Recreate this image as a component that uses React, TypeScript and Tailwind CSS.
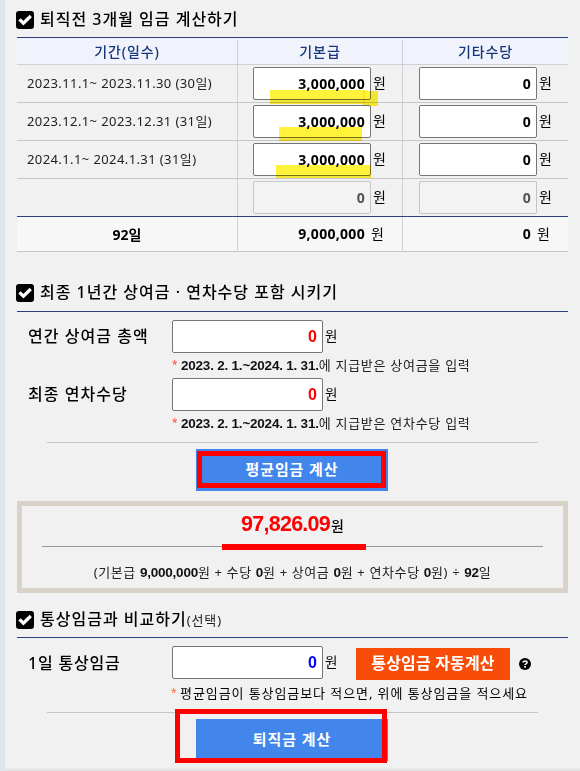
import React from 'react'

interface WageRow {
  period: string
  base: string
  extra: string
  disabled?: boolean
  marks?: string[]
}

const ROWS: WageRow[] = [
  {
    period: '2023.11.1~ 2023.11.30 (30일)',
    base: '3,000,000',
    extra: '0',
    marks: ['left-[32px] top-[25px] w-[95px] h-[14px]', 'left-[125px] top-[26px] w-[15px] h-[15px]'],
  },
  {
    period: '2023.12.1~ 2023.12.31 (31일)',
    base: '3,000,000',
    extra: '0',
    marks: ['left-[41px] top-[24px] w-[83px] h-[14px]'],
  },
  {
    period: '2024.1.1~ 2024.1.31 (31일)',
    base: '3,000,000',
    extra: '0',
    marks: ['left-[38px] top-[24px] w-[95px] h-[13px]'],
  },
  { period: '', base: '0', extra: '0', disabled: true },
]

function CheckBadge() {
  return (
    <svg viewBox="0 0 18 18" className="w-[18px] h-[18px] shrink-0">
      <rect width="18" height="18" rx="3" fill="#000" />
      <path d="M3.5 8.4 7.4 12.2 14.8 5" fill="none" stroke="#fff" strokeWidth="3.2" />
    </svg>
  )
}

function SectionTitle({ children, note }: { children: React.ReactNode; note?: string }) {
  return (
    <h2 className="flex items-center h-[26px] -ml-px whitespace-nowrap">
      <CheckBadge />
      <span className="ml-[6px] text-[16px] font-medium leading-[24px] tracking-[1px] -mt-[2px]">{children}</span>
      {note && <span className="text-[13px] leading-[26px] tracking-[0.9px] text-[#222]">{note}</span>}
    </h2>
  )
}

function AmountBox({ value, disabled }: { value: string; disabled?: boolean }) {
  return (
    <div
      className={`w-[118px] h-[33px] border rounded-[2px] pr-[5px] text-right text-[14px] leading-[31px] font-bold tracking-[0.3px] ${
        disabled ? 'border-[#c5c5c5] bg-[#f3f3f3] text-[#545454]' : 'border-[#767676] bg-white text-black'
      }`}
    >
      {value}
    </div>
  )
}

function AmountCell({ value, disabled, marks = [] }: { value: string; disabled?: boolean; marks?: string[] }) {
  return (
    <div className="relative flex pl-[15px] last:pl-[16px] pt-[2px] border-l border-[#d0d0d8]">
      <AmountBox value={value} disabled={disabled} />
      <span className="ml-[2px] text-[14px] leading-[32px]">원</span>
      {marks.map((m) => (
        <i key={m} className={`absolute bg-[#fff23a] mix-blend-multiply ${m}`} />
      ))}
    </div>
  )
}

function TotalCell({ value }: { value: string }) {
  return (
    <div className="flex border-l border-[#d0d0d8] last:pl-px text-[14px] leading-[34px]">
      <span className="w-[127px] text-right font-bold tracking-[0.3px]">{value}</span>
      <span className="ml-[6px]">원</span>
    </div>
  )
}

function WideBox({ value, color }: { value: string; color: string }) {
  return (
    <div
      className={`w-[151px] h-[33px] shrink-0 border border-[#767676] rounded-[2px] bg-white pr-[5px] text-right font-['Liberation_Sans'] text-[16px] leading-[31px] font-bold ${color}`}
    >
      {value}
    </div>
  )
}

// Latin figures inside Korean sentences
function Num({ children }: { children: React.ReactNode }) {
  return <b className="font-['Liberation_Sans'] text-[13.5px] tracking-[-0.22px] text-[#111]">{children}</b>
}

function Star({ color }: { color: string }) {
  return <span className={`inline-block w-[9px] text-[10px] leading-[10px] align-[2px] ${color}`}>*</span>
}

function BonusField({ label, target }: { label: string; target: string }) {
  return (
    <div className="h-[58px] whitespace-nowrap">
      <div className="flex h-[33px]">
        <span className="w-[155px] pl-[11px] text-[16px] font-medium leading-[32px] tracking-[1.05px]">{label}</span>
        <WideBox value="0" color="text-[#f00]" />
        <span className="ml-[2px] text-[13.5px] leading-[33px]">원</span>
      </div>
      <p className="ml-[155px] text-[13px] leading-[25px] tracking-[0.72px] text-[#222]">
        <Star color="text-[#ff4a3a]" />
        <Num>2023. 2. 1.~2024. 1. 31.</Num>
        {target}
      </p>
    </div>
  )
}

export default function App() {
  return (
    <div className="w-[580px] h-[771px] overflow-hidden bg-[#f1f1f1] border-l-[5px] border-[#e1e5f2] pl-[12px] pr-[12px] text-black font-['Noto_Sans','Noto_Sans_CJK_KR',sans-serif]">
      <section className="pt-[7px] h-[280px]">
        <SectionTitle>퇴직전 3개월 임금 계산하기</SectionTitle>
        <div className="mt-[4px] border-t border-[#2b3e80] w-[551px]">
          <div className="grid grid-cols-[220px_165px_166px] h-[27px] pt-[2px] bg-[#f0f3fc] border-b border-[#d0d0d8] text-center text-[14px] font-medium leading-[24px] tracking-[0.9px] text-[#17377c]">
            <span>기간(일수)</span>
            <span className="border-l border-[#d0d0d8]">기본급</span>
            <span className="border-l border-[#d0d0d8]">기타수당</span>
          </div>
          {ROWS.map((r, i) => (
            <div
              key={i}
              className={`grid grid-cols-[220px_165px_166px] h-[38px] border-b ${
                r.disabled ? 'border-[#2b3e80]' : 'border-[#c6c6c6]'
              }`}
            >
              <span className="pl-[10px] text-[13px] leading-[37px] tracking-[0.4px] text-[#222] whitespace-nowrap">
                {r.period}
              </span>
              <AmountCell value={r.base} disabled={r.disabled} marks={r.marks} />
              <AmountCell value={r.extra} disabled={r.disabled} />
            </div>
          ))}
          <div className="grid grid-cols-[220px_165px_166px] h-[35px] bg-[#f7f7f7] border-b border-[#c6c6c6]">
            <span className="text-center text-[14px] font-bold leading-[35px]">92일</span>
            <TotalCell value="9,000,000" />
            <TotalCell value="0" />
          </div>
        </div>
      </section>

      <section className="h-[327px]">
        <SectionTitle>최종 1년간 상여금 · 연차수당 포함 시키기</SectionTitle>
        <div className="mt-[5px] border-t border-[#2b3e80] w-[551px] pt-[8px]">
          <BonusField label="연간 상여금 총액" target="에 지급받은 상여금을 입력" />
          <BonusField label="최종 연차수당" target="에 지급받은 연차수당 입력" />
        </div>
        <div className="mt-[6px] ml-[30px] w-[491px] h-px bg-[#c6c6c6]" />
        <button className="relative block mt-[6px] ml-[179px] w-[192px] h-[42px] bg-[#4285eb] text-white text-[15px] font-bold leading-[38px] tracking-[0.9px] pb-[2px]">
          평균임금 계산
          <i className="absolute left-px top-[2px] w-[189px] h-[37px] border-[5px] border-[#f00]" />
        </button>
        <div className="mt-[10px] w-[551px] h-[92px] border-[5px] border-[#d9d2c9] text-center">
          <p className="h-[40px] text-[14px] font-medium leading-[36px]">
            <b className="font-['Liberation_Sans'] text-[21.5px] tracking-[-0.75px] text-[#f00]">97,826.09</b>
            <span className="ml-[1px]">원</span>
          </p>
          <div className="relative mx-[20px] h-px bg-[#999]">
            <i className="absolute left-[180px] top-[-2px] w-[144px] h-[6px] bg-[#f00]" />
          </div>
          <p className="text-[13px] leading-[50px] tracking-[0.62px] text-[#222] whitespace-nowrap">
            (기본급 <Num>9,000,000</Num>원 + 수당 <Num>0</Num>원 + 상여금 <Num>0</Num>원 + 연차수당 <Num>0</Num>원) ÷{' '}
            <Num>92</Num>일
          </p>
        </div>
      </section>

      <section className="h-[160px]">
        <SectionTitle note="(선택)">통상임금과 비교하기</SectionTitle>
        <div className="mt-[4px] border-t border-[#2b3e80] w-[551px] pt-[8px]">
          <div className="flex h-[33px] whitespace-nowrap">
            <span className="w-[155px] pl-[11px] text-[16px] font-medium leading-[34px] tracking-[0.8px]">
              1일 통상임금
            </span>
            <WideBox value="0" color="text-[#00f]" />
            <span className="ml-[2px] w-[31px] text-[13.5px] leading-[33px]">원</span>
            <button className="mt-[2px] w-[154px] h-[32px] bg-[#f84d08] text-white text-[16px] font-bold leading-[30px] tracking-[0.15px] pb-[2px]">
              통상임금 자동계산
            </button>
            <svg viewBox="0 0 12 12" className="ml-[9px] mt-[12px] w-[12px] h-[12px]">
              <circle cx="6" cy="6" r="6" />
              <path d="M3.8 4.5C4.5 2.4 8 2.5 8 4.5 8 5.8 6.1 5.8 6.1 7.1" fill="none" stroke="#fff" strokeWidth="1.6" />
              <rect x="5.2" y="8" width="1.7" height="1.7" fill="#fff" />
            </svg>
          </div>
          <p className="ml-[154px] h-[33px] text-[13px] leading-[28px] tracking-[0.92px] whitespace-nowrap">
            <Star color="text-[#ff6a2a]" />
            평균임금이 통상임금보다 적으면, 위에 통상임금을 적으세요
          </p>
        </div>
        <div className="ml-[30px] w-[491px] h-px bg-[#c6c6c6]" />
        <button className="relative block mt-[6px] ml-[179px] w-[192px] h-[42px] bg-[#4285eb] text-white text-[15px] font-bold leading-[38px] tracking-[0.9px] pb-[2px]">
          퇴직금 계산
          <i className="absolute left-[-21px] top-[-10px] w-[212px] h-[54px] border-[5px] border-[#f00]" />
        </button>
      </section>
      <div className="-mx-3 h-[4px] bg-gradient-to-b from-[#f1f1f1] to-[#dedede]" />
    </div>
  )
}
